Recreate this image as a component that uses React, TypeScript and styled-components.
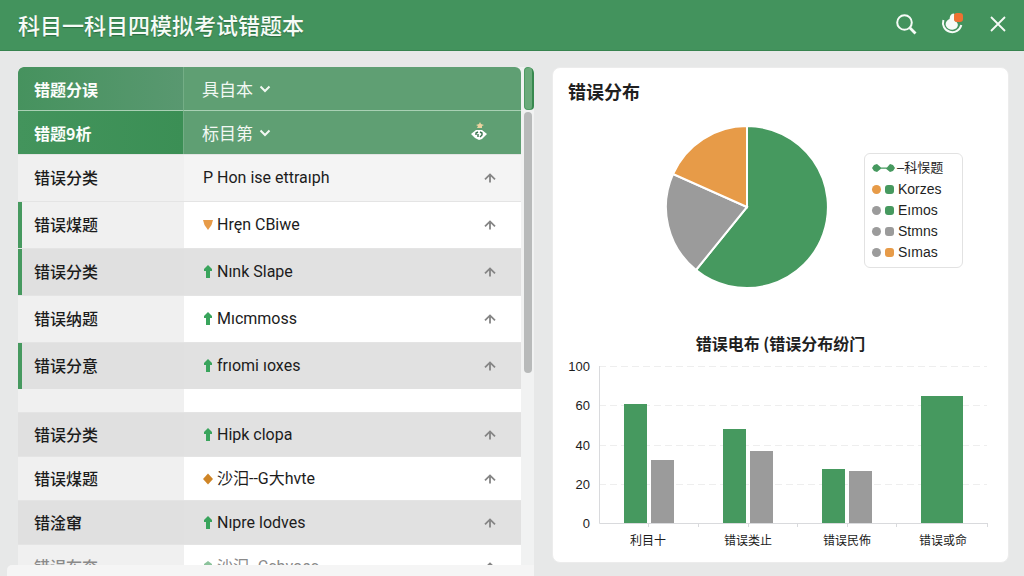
import React from "react";
import styled, { createGlobalStyle, css } from "styled-components";

const green = "#46995f";
const orange = "#e79b48";
const grey = "#9b9b9b";
const cjk = `"Noto Sans CJK SC", sans-serif`;

const GlobalStyle = createGlobalStyle`
  *, *::before, *::after { box-sizing: border-box; }
  body { margin: 0; background: #e7e8e8; color: #1f1f1f; font-family: Roboto, ${cjk}; }
  button { border: 0; padding: 0; background: none; color: inherit; cursor: pointer; }
`;

const Shell = styled.div`
  display: flex;
  flex-direction: column;
  height: 100vh;
  overflow: hidden;
`;

const TopBar = styled.header`
  flex: none;
  display: flex;
  align-items: center;
  justify-content: space-between;
  height: 51px;
  padding: 0 13px 2px 18px;
  background: #43935d;
  border-bottom: 1px solid #37834f;
  color: #f6fbf7;
`;

const AppTitle = styled.h1`
  margin: 0;
  font-family: ${cjk};
  font-size: 22px;
  font-weight: 500;
  line-height: 32px;
  text-shadow: 0 1px 1px rgba(20, 70, 35, 0.5);
`;

const Actions = styled.div`
  display: flex;
  align-items: center;
  gap: 20px;
`;

const IconButton = styled.button`
  display: flex;
  align-items: center;
  justify-content: center;
  width: 26px;
  height: 28px;
  svg { display: block; overflow: visible; }
`;

const Main = styled.main`
  flex: 1;
  min-height: 0;
  display: grid;
  grid-template-columns: minmax(0, 516fr) minmax(0, 457fr);
  gap: 18px;
  padding: 16px 15px 0 18px;
`;

const ListColumn = styled.section`
  display: flex;
  flex-direction: column;
  min-height: 0;
`;

const ListView = styled.div`
  flex: 1;
  min-height: 0;
  display: flex;
  gap: 3px;
  overflow: hidden;
  background: linear-gradient(to right, transparent 50%, #f1f2f2 50%);
  border-radius: 6px 6px 0 0;
`;

const BottomBar = styled.div`
  flex: none;
  height: 11px;
  margin-left: -11px;
  border-radius: 5px 0 0 0;
  background: #f5f5f5;
`;

const ScrollTrack = styled.div`
  flex: none;
  display: flex;
  flex-direction: column;
  gap: 2px;
  width: 10px;
`;

const ActiveThumb = styled.div`
  height: 43px;
  border-radius: 4px;
  background: #6bab7b;
  border: 1px solid #4d9a63;
  border-right: 2px solid #38894f;
`;

const Thumb = styled.div`
  width: 8px;
  height: 261px;
  border-radius: 4px;
  background: #b8baba;
`;

const Table = styled.table`
  flex: 1;
  min-width: 0;
  align-self: flex-start;
  table-layout: fixed;
  border-spacing: 0;
  border-radius: 6px 6px 0 0;
  overflow: hidden;
`;

const LabelCol = styled.col`
  width: 33%;
`;

const ActionCol = styled.col`
  width: 64px;
`;

const HeadRow = styled.tr<{ $last?: boolean }>`
  height: ${(p) => (p.$last ? 43 : 44)}px;
  background: #5f9f73;
  color: #fbfdfb;
  th {
    padding: 0 0 0 18px;
    text-align: left;
    ${(p) => !p.$last && css`border-bottom: 1px solid #a9d0b4;`}
  }
  th:first-child {
    padding-left: 16px;
    background: ${(p) =>
      p.$last
        ? "linear-gradient(to right, #43945c, #3b8f55)"
        : "linear-gradient(to right, #46925e, #599870)"};
    border-right: 1px solid #74ae86;
    font: 700 16px/24px ${cjk};
  }
  th:last-child { padding: 0 0 2px 9px; }
`;

const Picker = styled.label`
  display: inline-flex;
  align-items: center;
  gap: 6px;
`;

const PickerSelect = styled.select`
  appearance: none;
  border: 0;
  padding: 0;
  margin: 0;
  background: transparent;
  color: #f2f8f3;
  font: 400 17px/24px ${cjk};
`;

type Tone = "soft" | "white" | "grey";

const tones: Record<Tone, [string, string]> = {
  soft: ["#f0f0f0", "#f4f4f4"],
  white: ["#f0f0f0", "#ffffff"],
  grey: ["#e0e0e0", "#e1e1e1"],
};

const Row = styled.tr<{ $tone: Tone; $marked?: boolean; $compact?: boolean; $faded?: boolean }>`
  height: ${(p) => (p.$compact ? 44 : 47)}px;
  background: ${(p) => tones[p.$tone][1]};
  color: ${(p) => (p.$faded ? "#8a8a8a" : "#1c1c1c")};
  th, td {
    padding: 0 0 0 19px;
    text-align: left;
    border-top: 1px solid #e4e4e4;
  }
  th {
    padding: 0 0 2px 16px;
    background: ${(p) => tones[p.$tone][0]};
    font: 500 16px/24px ${cjk};
    ${(p) => p.$marked && css`box-shadow: inset 4px 0 0 ${green};`}
  }
  td:last-child { padding: 0 23px 0 0; }
`;

const SpacerRow = styled.tr`
  height: 23px;
  background: #fff;
  td { padding: 0; }
  td:first-child { background: #f0f0f0; }
`;

const Name = styled.span`
  display: flex;
  align-items: center;
  gap: 4px;
  font: 400 16px/24px Roboto, ${cjk};
  white-space: nowrap;
  svg { flex: none; }
`;

const RowButton = styled.button`
  display: flex;
  justify-content: center;
  width: 16px;
  margin-left: auto;
`;

const Card = styled.section`
  display: flex;
  flex-direction: column;
  margin-bottom: 13px;
  background: #fff;
  border: 1px solid #ececec;
  border-radius: 8px;
  overflow: hidden;
`;

const CardTitle = styled.h2`
  margin: 10px 0 0 15px;
  font: 700 18px/26px ${cjk};
`;

const PieArea = styled.div`
  display: flex;
  align-items: center;
  justify-content: flex-end;
  gap: 36px;
  margin-top: 22px;
  padding-right: 45px;
`;

const Legend = styled.ul`
  width: 99px;
  margin: 6px 0 0;
  padding: 4px 0 4px 7px;
  border: 1px solid #e2e2e2;
  border-radius: 6px;
  list-style: none;
`;

const LegendItem = styled.li`
  display: flex;
  align-items: center;
  gap: 4px;
  height: 21px;
  font: 400 14px/20px "Liberation Sans", ${cjk};
  white-space: nowrap;
`;

const LegendHead = styled(LegendItem)`
  gap: 1px;
  font-size: 13px;
`;

const Dot = styled.i<{ $color: string; $square?: boolean }>`
  width: 9px;
  height: 9px;
  border-radius: ${(p) => (p.$square ? 3 : 5)}px;
  background: ${(p) => p.$color};
`;

const ChartTitle = styled.h3`
  margin: 43px 0 0;
  text-align: center;
  font: 700 16px/24px ${cjk};
`;

const BarSvg = styled.svg`
  display: block;
  width: 100%;
  text { fill: #1c1c1c; font-family: "Liberation Sans", ${cjk}; }
  .value { font-size: 13px; text-anchor: end; }
  .category { font-size: 12px; text-anchor: middle; }
`;

const Chevron = () => (
  <svg width="12" height="8" viewBox="0 0 12 8" fill="none" stroke="#f2f8f3" strokeWidth="2">
    <path d="M1.5 1.5 L6 6 L10.5 1.5" />
  </svg>
);

const UpArrow = () => (
  <svg width="12" height="12" viewBox="0 0 12 12" fill="none" stroke="#858585" strokeWidth="1.8">
    <path d="M1 7.4 L6 2.4 L11 7.4 M6 3 V10.6" />
  </svg>
);

type Mark = "up" | "down" | "diamond" | "dot";

const MarkIcon = ({ kind }: { kind: Mark }) => (
  <svg width="10" height="14" viewBox="0 0 10 14">
    {kind === "up" && <path d="M5 0 L9 4 V6 H7 V13 H3 V6 H1 V4 Z" fill="#39a45c" />}
    {kind === "down" && <path d="M0 2 H10 L8.5 7 L5 12 L1.5 7 Z" fill={orange} />}
    {kind === "diamond" && <path d="M5 1.5 L10 7 L5 12.5 L0 7 Z" fill="#cf8526" />}
    {kind === "dot" && <path d="M5 1 L9 4 V8 L7 12 H3 L1 8 V4 Z" fill="#8cc39c" />}
  </svg>
);

interface Entry {
  label: string;
  name: string;
  mark?: Mark;
  tone: Tone;
  marked?: boolean;
  compact?: boolean;
  faded?: boolean;
}

const recent: Entry[] = [
  { label: "错误分类", name: "P Hon ise ettraıph", tone: "soft" },
  { label: "错误煤题", name: "Hręn CBiwe", mark: "down", tone: "white", marked: true },
  { label: "错误分类", name: "Nınk Slape", mark: "up", tone: "grey", marked: true },
  { label: "错误纳题", name: "Mıcmmoss", mark: "up", tone: "white" },
  { label: "错误分意", name: "frıomi ıoxes", mark: "up", tone: "grey", marked: true },
];

const earlier: Entry[] = [
  { label: "错误分类", name: "Hipk clopa", mark: "up", tone: "grey", compact: true },
  { label: "错误煤题", name: "沙汨--G大hvte", mark: "diamond", tone: "white", compact: true },
  { label: "错淦窜", name: "Nıpre lodves", mark: "up", tone: "grey", compact: true },
  { label: "错误布奔", name: "沙汨--Cchvoes", mark: "dot", tone: "white", compact: true, faded: true },
];

const EntryRow = ({ entry }: { entry: Entry }) => (
  <Row $tone={entry.tone} $marked={entry.marked} $compact={entry.compact} $faded={entry.faded}>
    <th scope="row">{entry.label}</th>
    <td>
      <Name>
        {entry.mark && <MarkIcon kind={entry.mark} />}
        {entry.name}
      </Name>
    </td>
    <td>
      <RowButton aria-label="上移"><UpArrow /></RowButton>
    </td>
  </Row>
);

const FilterPicker = ({ text }: { text: string }) => (
  <Picker>
    <PickerSelect aria-label={text} defaultValue={text}>
      <option>{text}</option>
    </PickerSelect>
    <Chevron />
  </Picker>
);

const legend: [string, string, string][] = [
  [orange, green, "Korzes"],
  [grey, green, "Eımos"],
  [grey, grey, "Stmns"],
  [grey, orange, "Sımas"],
];

const scale: [string, number][] = [["100", 11], ["60", 50], ["40", 90], ["20", 129], ["0", 168]];
const bars: [number, number, number, string][] = [
  [71, 49, 23, green], [98, 105, 23, grey],
  [170, 74, 23, green], [197, 96, 23, grey],
  [269, 114, 23, green], [296, 116, 23, grey],
  [368, 41, 42, green],
];
const categories: [string, number][] = [["利目十", 95], ["错误类止", 195], ["错误民佈", 294], ["错误或命", 390]];
const ticks = [95, 145, 195, 244, 294, 343, 434];

export default function App() {
  return (
    <Shell>
      <GlobalStyle />
      <TopBar>
        <AppTitle>科目一科目四模拟考试错题本</AppTitle>
        <Actions>
          <IconButton aria-label="搜索">
            <svg width="22" height="22" viewBox="0 0 22 22" fill="none" stroke="currentColor">
              <circle cx="9.5" cy="9.5" r="7.3" strokeWidth="2" />
              <path d="M14.8 14.8 L20.5 20.5" strokeWidth="2.8" />
            </svg>
          </IconButton>
          <IconButton aria-label="通知">
            <svg width="24" height="24" viewBox="0 0 24 24">
              <path d="M3.4 8 A9.3 9.3 0 1 0 21.3 13" fill="none" stroke="currentColor" strokeWidth="2" />
              <path d="M13.5 1.5 C10.5 2 9.8 4.5 9.6 7 C6.5 8.5 5 11 6 14 C7.5 18 14.5 19 17 15.5 C18.4 13.5 18 11.5 16.5 10 C14 9 13.5 6 14.5 2 Z" fill="currentColor" />
              <rect x="14" y="1" width="9" height="9" rx="3" fill="#ee7132" />
            </svg>
          </IconButton>
          <IconButton aria-label="关闭">
            <svg width="16" height="16" viewBox="0 0 16 16" fill="none" stroke="currentColor" strokeWidth="1.8">
              <path d="M1 1 L15 15 M15 1 L1 15" />
            </svg>
          </IconButton>
        </Actions>
      </TopBar>
      <Main>
        <ListColumn>
          <ListView>
            <Table>
              <colgroup><LabelCol /><col /><ActionCol /></colgroup>
              <thead>
                <HeadRow>
                  <th scope="col">错题分误</th>
                  <th scope="col"><FilterPicker text="具自本" /></th>
                  <th scope="col" />
                </HeadRow>
                <HeadRow $last>
                  <th scope="col">错题9析</th>
                  <th scope="col"><FilterPicker text="标目第" /></th>
                  <th scope="col">
                    <IconButton aria-label="显示">
                      <svg width="18" height="22" viewBox="0 0 18 22">
                        <path d="M6 4 L9 3 L10 1 L11 3 L14 4 L12 5 L12 7 H7 L8 5 Z" fill="#ecd3a0" />
                        <path d="M1 13 L6 9 H12 L17 13 L12 18 L9 19 L5 17 Z" fill="#fff" />
                        <path d="M6 14 V12 L8 11 M10 11 L12 12 V14 L10 16 M8 13 V16" fill="none" stroke="#3b7550" strokeWidth="1.4" />
                      </svg>
                    </IconButton>
                  </th>
                </HeadRow>
              </thead>
              <tbody>
                {recent.map((entry, i) => <EntryRow key={i} entry={entry} />)}
                <SpacerRow><td /><td /><td /></SpacerRow>
                {earlier.map((entry, i) => <EntryRow key={i} entry={entry} />)}
              </tbody>
            </Table>
            <ScrollTrack><ActiveThumb /><Thumb /></ScrollTrack>
          </ListView>
          <BottomBar />
        </ListColumn>
        <Card>
          <CardTitle>错误分布</CardTitle>
          <PieArea>
            <svg width="162" height="162" viewBox="-81 -81 162 162" stroke="#fff" strokeWidth="2">
              <path d="M0 0 V-81 A81 81 0 1 1 -51 63 Z" fill={green} />
              <path d="M0 0 L-51 63 A81 81 0 0 1 -74 -33 Z" fill={grey} />
              <path d="M0 0 L-74 -33 A81 81 0 0 1 0 -81 Z" fill={orange} />
            </svg>
            <Legend>
              <LegendHead>
                <svg width="24" height="10" viewBox="0 0 24 10" fill={green}>
                  <path d="M0 5 L2 2 L5 1 L9 4.4 H15 L18 1 L21 2 L23 5 L21 8 L18 9 L14 5.8 H9 L5 9 L2 8 Z" />
                </svg>
                –科悮题
              </LegendHead>
              {legend.map(([a, b, text]) => (
                <LegendItem key={text}>
                  <Dot $color={a} /><Dot $color={b} $square />{text}
                </LegendItem>
              ))}
            </Legend>
          </PieArea>
          <ChartTitle>错误电布 (错误分布纷门</ChartTitle>
          <BarSvg viewBox="0 0 455 200" role="img" aria-label="错误分布">
            {scale.map(([text, y]) => (
              <g key={text}>
                <text className="value" x="37" y={y + 5}>{text}</text>
                {y < 168 && <path d={`M46 ${y}.5 H434`} stroke="#eeeeee" strokeDasharray="7 4" />}
              </g>
            ))}
            <path d="M46.5 11 V168.5 H434" fill="none" stroke="#d9dadd" />
            {ticks.map((x) => <path key={x} d={`M${x}.5 168 V172`} stroke="#d9dadd" />)}
            {bars.map(([x, y, w, color]) => (
              <rect key={x} x={x} y={y} width={w} height={168 - y} fill={color} />
            ))}
            {categories.map(([text, x]) => (
              <text key={text} className="category" x={x} y="190">{text}</text>
            ))}
          </BarSvg>
        </Card>
      </Main>
    </Shell>
  );
}
